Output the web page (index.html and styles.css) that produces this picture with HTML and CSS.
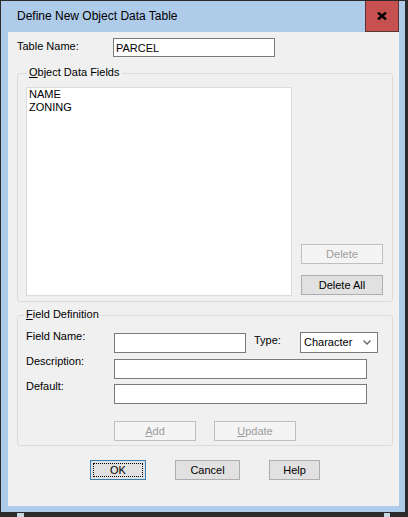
FILE: index.html
```html
<!DOCTYPE html>
<html>
<head>
<meta charset="utf-8">
<link rel="stylesheet" href="styles.css">
</head>
<body>
<div class="window">
  <div class="titlebar">
    <span class="title">Define New Object Data Table</span>
    <div class="close">
      <svg width="10" height="8" viewBox="0 0 10 8"><path d="M1 0.5 L9 7.5 M9 0.5 L1 7.5" stroke="#000" stroke-width="2.4"/></svg>
    </div>
  </div>
  <div class="client">
    <div class="name-row">
      <span class="lbl name-lbl">Table Name:</span>
      <input class="edit name-edit" type="text" value="PARCEL">
    </div>

    <div class="group group-fields">
      <span class="legend legend-fields"><u>O</u>bject Data Fields</span>
      <div class="listbox">
        <div class="item">NAME</div>
        <div class="item">ZONING</div>
      </div>
      <div class="side-buttons">
        <button class="btn btn-disabled btn-delete">Delete</button>
        <button class="btn btn-delete-all">Delete All</button>
      </div>
    </div>

    <div class="group group-def">
      <span class="legend legend-def"><u>F</u>ield Definition</span>
      <div class="row row-first">
        <span class="lbl lbl-field">Field Name:</span>
        <input class="edit edit-field" type="text">
        <span class="lbl lbl-type">Type:</span>
        <div class="combo">
          <span>Character</span>
          <svg class="chev" width="8" height="5" viewBox="0 0 8 5"><path d="M0.5 0.5 L4 4 L7.5 0.5" fill="none" stroke="#6d6d6d" stroke-width="1.5"/></svg>
        </div>
      </div>
      <div class="row row-desc">
        <span class="lbl lbl-field lbl-low">Description:</span>
        <input class="edit edit-wide" type="text">
      </div>
      <div class="row row-default">
        <span class="lbl lbl-field lbl-low">Default:</span>
        <input class="edit edit-wide" type="text">
      </div>
      <div class="row row-buttons">
        <button class="btn btn-disabled btn-add"><u>A</u>dd</button>
        <button class="btn btn-disabled btn-update"><u>U</u>pdate</button>
      </div>
    </div>

    <div class="dialog-buttons">
      <button class="btn btn-default btn-ok">OK</button>
      <button class="btn btn-cancel">Cancel</button>
      <button class="btn btn-help">Help</button>
    </div>
  </div>
</div>
<div class="bg-piece bg-left"></div>
<div class="bg-piece bg-right"></div>
</body>
</html>
```
FILE: styles.css
```css
html, body {
  margin: 0;
  padding: 0;
}
body {
  background: #2b2b2b;
  width: 408px;
  height: 517px;
  overflow: hidden;
  position: relative;
  font-family: "Liberation Sans", Arial, sans-serif;
  font-size: 11px;
  line-height: 13px;
  color: #000;
}
.window {
  margin: 1px 0 0 1px;
  width: 404px;
  height: 511px;
  box-sizing: border-box;
  background: #aecbe9;
  padding: 0 6px 6px 7px;
}
.titlebar {
  height: 31px;
  display: flex;
  justify-content: space-between;
  align-items: flex-start;
}
.title {
  font-size: 12px;
  line-height: 15px;
  margin: 8px 0 0 9px;
  color: #000;
}
.close {
  width: 34px;
  height: 31px;
  box-sizing: border-box;
  background: #c75050;
  border: 1px solid #5b3434;
  border-top: none;
  display: flex;
  align-items: center;
  justify-content: center;
  padding-bottom: 1px;
}
.client {
  width: 391px;
  height: 474px;
  background: #f0f0f0;
  padding-top: 6px;
  box-sizing: border-box;
}
.lbl {
  white-space: nowrap;
}
.name-row {
  display: flex;
  align-items: flex-start;
  margin-left: 9px;
  height: 19px;
}
.name-lbl {
  width: 96px;
  margin-top: 2px;
}
.edit {
  box-sizing: border-box;
  border: 1px solid #7a7a7a;
  background: #fff;
  font-family: "Liberation Sans", Arial, sans-serif;
  font-size: 11px;
  padding: 0 2px;
  margin: 0;
  outline: none;
  color: #000;
}
.name-edit {
  width: 162px;
  height: 19px;
}
.group {
  position: relative;
  margin-left: 9px;
  width: 376px;
  box-sizing: border-box;
  border: 1px solid #dcdcdc;
  border-radius: 3px;
}
.legend {
  position: absolute;
  top: -8px;
  background: #f0f0f0;
  padding: 0 2px;
  white-space: nowrap;
}
.legend-fields {
  left: 9px;
}
.legend-def {
  left: 6px;
}
.group-fields {
  margin-top: 16px;
  height: 229px;
  padding: 13px 0 0 8px;
  display: flex;
  gap: 9px;
}
.listbox {
  width: 266px;
  height: 209px;
  box-sizing: border-box;
  background: #fff;
  border: 1px solid #dcdcdc;
  padding: 0 2px;
}
.item {
  height: 13px;
}
.side-buttons {
  display: flex;
  flex-direction: column;
  gap: 11px;
  padding-top: 157px;
}
.btn {
  box-sizing: border-box;
  height: 20px;
  margin: 0;
  padding: 0;
  font-family: "Liberation Sans", Arial, sans-serif;
  font-size: 11px;
  line-height: 13px;
  background: #e1e1e1;
  border: 1px solid #adadad;
  color: #000;
  text-align: center;
}
.btn-disabled {
  background: #f4f4f4;
  border-color: #bfbfbf;
  color: #9d9d9d;
}
.btn-delete, .btn-delete-all, .btn-add, .btn-update {
  width: 82px;
}
.group-def {
  margin-top: 13px;
  height: 131px;
  padding: 16px 0 0 8px;
}
.row {
  display: flex;
  align-items: flex-start;
}
.row-first {
  height: 21px;
}
.lbl-field {
  width: 88px;
  margin-top: -2px;
}
.lbl-low {
  margin-top: -4px;
}
.edit-field {
  width: 132px;
  height: 20px;
  margin-top: 1px;
}
.lbl-type {
  width: 46px;
  margin-left: 8px;
  margin-top: 2px;
}
.combo {
  width: 78px;
  height: 21px;
  box-sizing: border-box;
  border: 1px solid #7a7a7a;
  background: #fff;
  display: flex;
  align-items: center;
  justify-content: space-between;
  padding: 0 6px 0 3px;
}
.chev {
  display: block;
}
.edit-wide {
  width: 253px;
  height: 20px;
}
.row-desc {
  margin-top: 6px;
}
.row-default {
  margin-top: 5px;
}
.row-buttons {
  margin-top: 17px;
  padding-left: 88px;
  gap: 18px;
}
.dialog-buttons {
  display: flex;
  margin-top: 14px;
  padding-left: 82px;
}
.btn-ok {
  width: 56px;
}
.btn-default {
  border-color: #3c7fb1;
  outline: 1px dotted #000;
  outline-offset: -4px;
}
.btn-cancel {
  width: 65px;
  margin-left: 29px;
}
.btn-help {
  width: 51px;
  margin-left: 29px;
}
.bg-piece {
  position: absolute;
  bottom: 0;
  height: 4px;
  background: #c9d5e2;
}
.bg-left {
  left: 17px;
  width: 7px;
}
.bg-right {
  left: 384px;
  width: 6px;
}
```
